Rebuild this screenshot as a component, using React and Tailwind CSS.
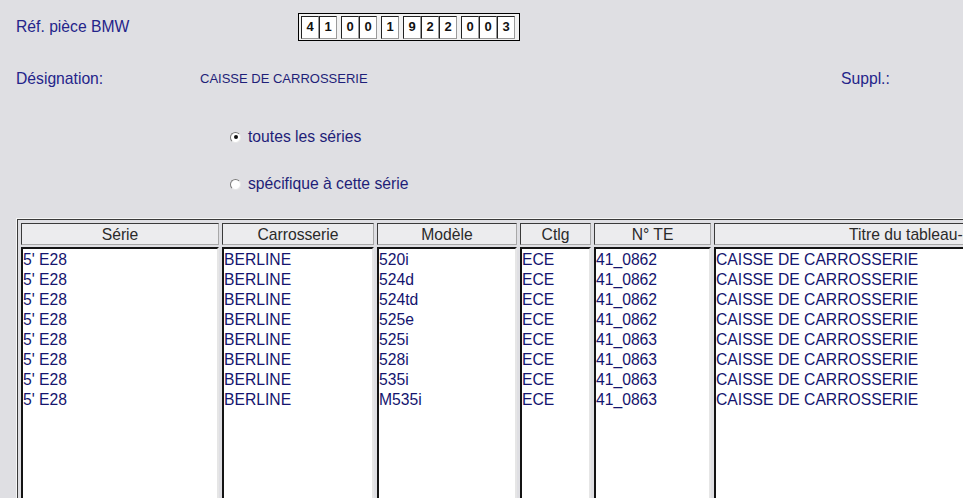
const refGroups = [["4", "1"], ["0", "0"], ["1"], ["9", "2", "2"], ["0", "0", "3"]];

const columns = [
  { title: "Série", width: "w-[198px]", key: "serie" },
  { title: "Carrosserie", width: "w-[152px]", key: "carr" },
  { title: "Modèle", width: "w-[140px]", key: "modele" },
  { title: "Ctlg", width: "w-[71px]", key: "ctlg" },
  { title: "N° TE", width: "w-[117px]", key: "te" },
  { title: "Titre du tableau-d'illustrations", width: "w-[474px]", key: "titre" },
];

const rows = [
  ["5' E28", "BERLINE", "520i", "ECE", "41_0862"],
  ["5' E28", "BERLINE", "524d", "ECE", "41_0862"],
  ["5' E28", "BERLINE", "524td", "ECE", "41_0862"],
  ["5' E28", "BERLINE", "525e", "ECE", "41_0862"],
  ["5' E28", "BERLINE", "525i", "ECE", "41_0863"],
  ["5' E28", "BERLINE", "528i", "ECE", "41_0863"],
  ["5' E28", "BERLINE", "535i", "ECE", "41_0863"],
  ["5' E28", "BERLINE", "M535i", "ECE", "41_0863"],
].map((r) => [...r, "CAISSE DE CARROSSERIE"]);

function Radio({ checked, label }) {
  return (
    <label className="flex h-[20px] items-center">
      <span className="flex h-[11px] w-[11px] items-center justify-center rounded-full border border-t-[#7a7a7a] border-l-[#7a7a7a] border-r-[#e8e8e8] border-b-[#e8e8e8] bg-white">
        {checked && <span className="h-[4px] w-[4px] rounded-full bg-[#111]" />}
      </span>
      <span className="ml-[7px] text-[15.7px] text-[#1e1e78]">{label}</span>
    </label>
  );
}

export default function App() {
  return (
    <div
      className="h-[498px] w-[963px] overflow-hidden bg-[#dfdfe3] pt-[13px]"
      style={{ fontFamily: '"Liberation Sans", Arial, sans-serif' }}
    >
      <div className="flex h-[28px] items-center pl-[16px]">
        <div className="w-[282px] text-[15.7px] text-[#24248a]">Réf. pièce BMW</div>
        <div className="flex h-[28px] w-[222px] items-center gap-[4px] border border-black bg-[#f2f2f2] px-[2px]">
          {refGroups.map((g, i) => (
            <div key={i} className="flex">
              {g.map((d, j) => (
                <div
                  key={j}
                  className="flex h-[23px] w-[18px] items-center justify-center border border-t-[#222] border-l-[#222] border-r-[#9a9a9a] border-b-[#9a9a9a] bg-white text-[13px] font-bold text-[#111]"
                >
                  {d}
                </div>
              ))}
            </div>
          ))}
        </div>
      </div>

      <div className="mt-[28px] flex h-[20px] items-center pl-[16px]">
        <div className="w-[184px] text-[15.7px] text-[#24248a]">Désignation:</div>
        <div className="w-[641px] text-[13px] text-[#1e1e78]">CAISSE DE CARROSSERIE</div>
        <div className="text-[15.7px] text-[#24248a]">Suppl.:</div>
      </div>

      <div className="mt-[38px] pl-[230px]">
        <Radio checked label="toutes les séries" />
        <div className="mt-[27px]">
          <Radio label="spécifique à cette série" />
        </div>
      </div>

      <div className="ml-[16px] mt-[24px] border-l border-t border-[#f6f6f6]">
        <div className="flex gap-[3px] border-l border-t border-[#3a3a3a] pl-[3px] pt-[3px]">
          {columns.map((c, ci) => (
            <div key={c.key} className={`${c.width} flex shrink-0 flex-col gap-[2px]`}>
              <div className="flex h-[22px] items-center justify-center overflow-hidden whitespace-nowrap border border-t-[#3a3a3a] border-l-[#3a3a3a] border-r-[#a8a8a8] border-b-[#a8a8a8] bg-[#ececee] pt-[1px] text-[15.7px] text-[#2a2a2a]">
                {c.title}
              </div>
              <div className="h-[280px] border-2 border-t-[#141414] border-l-[#141414] border-r-[#e6e6e6] border-b-[#e6e6e6] bg-white pt-[1px]">
                {rows.map((r, ri) => (
                  <div key={ri} className="h-[20px] whitespace-nowrap text-[15.7px] leading-[20px] text-[#14146e]">
                    {r[ci]}
                  </div>
                ))}
              </div>
            </div>
          ))}
        </div>
      </div>
    </div>
  );
}
